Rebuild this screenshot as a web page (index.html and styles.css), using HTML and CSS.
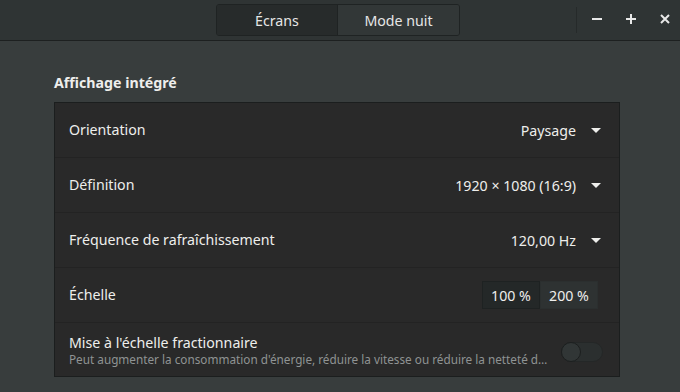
FILE: index.html
```html
<!DOCTYPE html>
<html lang="fr">
<head>
<meta charset="utf-8">
<link rel="stylesheet" href="styles.css">
</head>
<body>
<div class="window">
  <header class="headerbar">
    <div class="tabs">
      <div class="tab active">Écrans</div>
      <div class="tab">Mode nuit</div>
    </div>
    <div class="spacer"></div>
    <div class="controls">
      <span class="ctl"><svg width="10" height="10" viewBox="0 0 10 10"><rect x="0" y="4" width="10" height="2" fill="#e8e8e8"/></svg></span>
      <span class="ctl"><svg width="10" height="10" viewBox="0 0 10 10"><rect x="0" y="4" width="10" height="2" fill="#e8e8e8"/><rect x="4" y="0" width="2" height="10" fill="#e8e8e8"/></svg></span>
      <span class="ctl"><svg width="10" height="10" viewBox="0 0 10 10"><path d="M1 1L9 9M9 1L1 9" stroke="#e8e8e8" stroke-width="2"/></svg></span>
    </div>
  </header>
  <main class="content">
    <h2 class="title">Affichage intégré</h2>
    <div class="panel">
      <div class="row">
        <span class="label">Orientation</span>
        <span class="value">Paysage <span class="arrow"></span></span>
      </div>
      <div class="row">
        <span class="label">Définition</span>
        <span class="value">1920 × 1080 (16:9) <span class="arrow"></span></span>
      </div>
      <div class="row">
        <span class="label">Fréquence de rafraîchissement</span>
        <span class="value">120,00 Hz <span class="arrow"></span></span>
      </div>
      <div class="row">
        <span class="label">Échelle</span>
        <span class="scale">
          <span class="sbtn checked">100 %</span><span class="sbtn">200 %</span>
        </span>
      </div>
      <div class="row last">
        <span class="labels">
          <span class="label">Mise à l'échelle fractionnaire</span>
          <span class="sub">Peut augmenter la consommation d'énergie, réduire la vitesse ou réduire la netteté d…</span>
        </span>
        <span class="switch"><span class="knob"></span></span>
      </div>
    </div>
  </main>
</div>
</body>
</html>
```
FILE: styles.css
```css
* { box-sizing: border-box; }
html, body { margin: 0; padding: 0; }
body {
  width: 680px;
  height: 392px;
  overflow: hidden;
  background: #383d3d;
  font-family: "Noto Sans", "Open Sans", sans-serif;
  color: #eeeeec;
  font-size: 14.2px;
}
.window { display: flex; flex-direction: column; height: 392px; }
.headerbar {
  height: 41px;
  background: #2f3434;
  border-bottom: 1px solid #1d2020;
  display: flex;
  align-items: flex-start;
  padding-left: 216px;
}
.spacer { flex: 1; }
.tabs {
  display: flex;
  height: 32px;
  margin-top: 4px;
  border: 1px solid #1f2323;
  border-radius: 3px;
  overflow: hidden;
}
.tab {
  width: 121px;
  display: flex;
  align-items: center;
  justify-content: center;
  background: #323737;
  color: #e6e6e6;
  font-size: 14.2px;
}
.tab.active { background: #272b2b; border-right: 1px solid #1f2323; }
.controls {
  display: flex;
  align-items: center;
  height: 26px;
  margin-top: 7px;
  margin-right: -2px;
  border-left: 1px solid #262a2a;
  padding-left: 3px;
}
.ctl {
  width: 34px;
  height: 26px;
  display: flex;
  justify-content: center;
  align-items: center;
  margin-top: -2px;
}
.content { padding: 0 60px 0 54px; }
.title {
  font-size: 14.2px;
  font-weight: bold;
  margin: 32px 0 0 0;
  height: 29px;
  color: #eeeeec;
}
.panel {
  width: 566px;
  background: #292929;
  border: 1px solid #1b1e1e;
}
.row {
  height: 55px;
  display: flex;
  align-items: center;
  justify-content: space-between;
  padding: 0 18px 0 14px;
  border-bottom: 1px solid #232323;
}
.row.last { border-bottom: none; height: 53px; padding-right: 16px; }
.label { color: #eeeeec; line-height: 18px; }
.value { display: flex; align-items: center; color: #eeeeec; }
.arrow {
  display: inline-block;
  width: 0; height: 0;
  border-left: 5px solid transparent;
  border-right: 5px solid transparent;
  border-top: 5px solid #eeeeec;
  margin-left: 15px;
}
.scale { display: flex; margin-right: 3px; }
.sbtn {
  width: 58px;
  height: 28px;
  display: flex;
  align-items: center;
  justify-content: center;
  background: #2e3232;
  border: 1px solid #2b2f2f;
}
.sbtn.checked { background: #242828; border-color: #1e2222; }
.labels { display: flex; flex-direction: column; margin-top: 1px; }
.sub { font-size: 11.75px; line-height: 14px; color: #8f9393; white-space: nowrap; }
.switch {
  width: 42px; height: 20px;
  border-radius: 10px;
  background: #2b2f2f;
  border: 1px solid #242727;
  position: relative;
  margin-top: 4px;
}
.knob {
  position: absolute;
  left: -1px; top: -1px;
  width: 20px; height: 20px;
  border-radius: 50%;
  background: #313636;
  border: 1px solid #1c1f1f;
}
```
